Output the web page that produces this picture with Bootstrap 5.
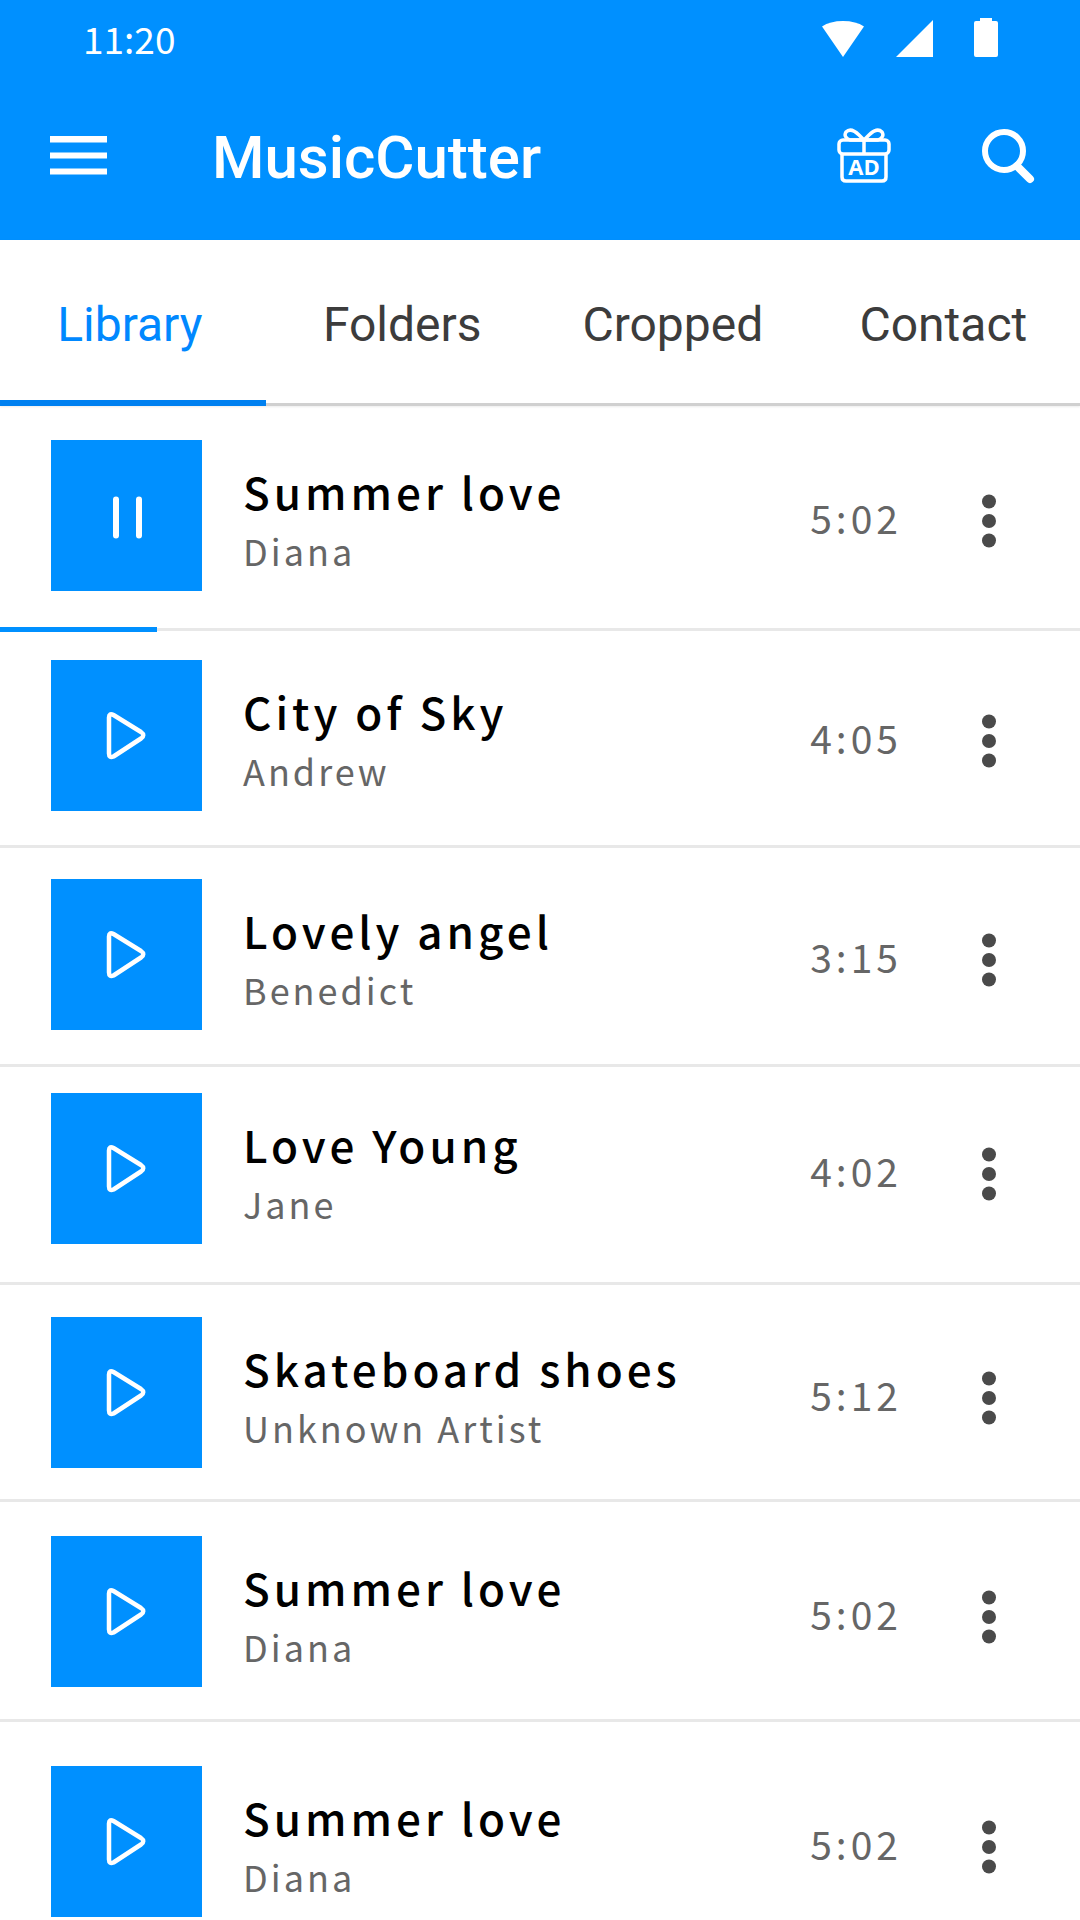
<!DOCTYPE html>
<html lang="en">
<head>
<meta charset="utf-8">
<meta name="viewport" content="width=device-width, initial-scale=1">
<title>MusicCutter</title>
<link href="https://cdn.jsdelivr.net/npm/bootstrap@5.3.0/dist/css/bootstrap.min.css" rel="stylesheet">
<style>
:root { --brand: #0090ff; --ink: #3c3c3c; --soft: #666; --rule: #e8e8e8; }
body { font-family: "Noto Sans CJK SC", "Noto Sans", sans-serif; background: #fff; color: #000; overflow-x: hidden; }
svg { display: block; }
.app-head { background: var(--brand); color: #fff; height: 240px; }
.status { height: 76px; padding: 0 81px 0 83px; }
.clock { font-size: 37px; line-height: 40px; }
.status-icons { gap: 32px; }
.toolbar { padding: 38px 45px 0 50px; }
.toolbar .plain-btn { margin-bottom: 5px; }
.brand-name { font: 500 60px/88px Roboto, sans-serif; margin-left: 105px; }
.plain-btn { background: none; border: 0; padding: 0; color: inherit; }
.gift { margin-right: 91px; }
.tabs { height: 166px; border-bottom: 3px solid #d0d0d0; box-shadow: 0 1px 2px rgba(0,0,0,.08); }
.tab { font: 400 48px/56px Roboto, sans-serif; color: var(--ink); text-decoration: none; height: 166px; padding-top: 57px; text-align: center; }
.tab.active { color: #0088ff; border-bottom: 6px solid #0080f0; padding-right: 6px; }
.track { padding: 31px 0 34px 51px; border-bottom: 3px solid var(--rule); position: relative; }
.track:nth-child(1) { padding-top: 34px; padding-bottom: 37px; }
.track:nth-child(2) { padding-top: 29px; }
.track:nth-child(4) { padding-top: 26px; padding-bottom: 38px; }
.track:nth-child(5) { padding-top: 32px; padding-bottom: 31px; }
.track:nth-child(6) { padding-top: 34px; padding-bottom: 32px; }
.track:nth-child(7) { padding-top: 44px; padding-bottom: 0; border-bottom: 0; }
.tile { width: 151px; height: 151px; background: var(--brand); border: 0; padding: 0; flex: none; }
.names { margin-left: 41px; padding-top: 21px; }
.song { font-size: 44px; line-height: 60px; letter-spacing: 4px; margin: 0; font-weight: 500; }
.artist { font-size: 36px; line-height: 58px; letter-spacing: 3px; color: var(--soft); margin: 0; }
.length { font-size: 39px; line-height: 52px; letter-spacing: 4px; color: var(--soft); padding-top: 51px; }
.more { margin: 51px 81px 0 77px; color: #4a4a4a; }
.played { position: absolute; left: 0; bottom: -4px; height: 5px; background: var(--brand); border-radius: 0; }
</style>
<script src="https://cdn.jsdelivr.net/npm/bootstrap@5.3.0/dist/js/bootstrap.bundle.min.js"></script>
</head>
<body>
<svg class="d-none" aria-hidden="true">
  <symbol id="play" viewBox="0 0 151 151"><path d="M58 57.500Q58 52.500 62.500 55L90 72Q94.500 75 90 78.500L62.500 96.500Q58 98.500 58 93.500Z" fill="none" stroke="#fff" stroke-width="4.500" stroke-linejoin="round"/></symbol>
  <symbol id="pause" viewBox="0 0 151 151"><path d="M65 59.500V95.500M88 59.500V95.500" stroke="#fff" stroke-width="6" stroke-linecap="round"/></symbol>
  <symbol id="dots" viewBox="0 0 20 60"><circle cx="10" cy="10.500" r="7"/><circle cx="10" cy="30" r="7"/><circle cx="10" cy="49.500" r="7"/></symbol>
</svg>

<header class="app-head">
  <div class="status d-flex justify-content-between align-items-center">
    <time class="clock">11:20</time>
    <div class="status-icons d-flex align-items-center" aria-hidden="true">
      <svg width="42" height="40" viewBox="0 0 42 40" fill="#fff"><path d="M0 8.500Q8 3 21 3T42 8.500L21 39Z"/></svg>
      <svg width="37" height="40" viewBox="0 0 37 40" fill="#fff"><path d="M37 2V39H0Z"/></svg>
      <svg class="ms-2" width="26" height="40" viewBox="0 0 26 40" fill="#fff"><path d="M7 0H19V3H23Q25 3 25 5V37Q25 39 23 39H3Q1 39 1 37V5Q1 3 3 3H7Z"/></svg>
    </div>
  </div>
  <div class="toolbar d-flex align-items-center">
    <button class="plain-btn" type="button" aria-label="Menu"><svg width="57" height="40" viewBox="0 0 57 40" fill="#fff"><path d="M0 0H57V6.500H0ZM0 16.500H57V22.500H0ZM0 32.500H57V38.500H0Z"/></svg></button>
    <h1 class="brand-name mb-0 me-auto">MusicCutter</h1>
    <button class="plain-btn gift" type="button" aria-label="Gift ads">
      <svg width="54" height="56" viewBox="0 0 54 56" fill="none" stroke="#fff" stroke-width="3.500" stroke-linejoin="round">
        <rect x="2" y="12" width="50" height="14" rx="4"/>
        <path d="M27 12V26M5 26V49Q5 53 9 53H45Q49 53 49 49V26M27 12H13Q6 9 9 4Q14-1 22 7L27 12ZM27 12H41Q48 9 45 4Q40-1 32 7Z"/>
        <text x="27" y="47" text-anchor="middle" font-family="Open Sans, sans-serif" font-weight="700" font-size="22" fill="#fff" stroke="none">AD</text>
      </svg>
    </button>
    <button class="plain-btn" type="button" aria-label="Search"><svg width="53" height="56" viewBox="0 0 53 56" fill="none" stroke="#fff"><circle cx="22" cy="23" r="19" stroke-width="6"/><path d="M35 38L48 51" stroke-width="8" stroke-linecap="round"/></svg></button>
  </div>
</header>

<nav class="tabs d-flex">
  <a class="tab active" href="#library" style="width:24.600%">Library</a>
  <a class="tab" href="#folders" style="width:25.300%">Folders</a>
  <a class="tab" href="#cropped" style="width:24.800%">Cropped</a>
  <a class="tab" href="#contact" style="width:25.300%">Contact</a>
</nav>

<main>
  <ul class="list-unstyled mb-0">
    <li class="track d-flex align-items-start">
      <button class="tile" type="button" aria-label="Pause"><svg width="151" height="151"><use href="#pause"/></svg></button>
      <div class="names me-auto"><h2 class="song">Summer love</h2><p class="artist">Diana</p></div>
      <span class="length">5:02</span>
      <button class="plain-btn more" type="button" aria-label="More"><svg width="20" height="60" fill="currentColor"><use href="#dots"/></svg></button>
      <div class="played" role="progressbar" aria-label="Played" aria-valuenow="14.500" aria-valuemin="0" aria-valuemax="100" style="width:14.500%"></div>
    </li>
    <li class="track d-flex align-items-start">
      <button class="tile" type="button" aria-label="Play"><svg width="151" height="151"><use href="#play"/></svg></button>
      <div class="names me-auto"><h2 class="song">City of Sky</h2><p class="artist">Andrew</p></div>
      <span class="length">4:05</span>
      <button class="plain-btn more" type="button" aria-label="More"><svg width="20" height="60" fill="currentColor"><use href="#dots"/></svg></button>
    </li>
    <li class="track d-flex align-items-start">
      <button class="tile" type="button" aria-label="Play"><svg width="151" height="151"><use href="#play"/></svg></button>
      <div class="names me-auto"><h2 class="song">Lovely angel</h2><p class="artist">Benedict</p></div>
      <span class="length">3:15</span>
      <button class="plain-btn more" type="button" aria-label="More"><svg width="20" height="60" fill="currentColor"><use href="#dots"/></svg></button>
    </li>
    <li class="track d-flex align-items-start">
      <button class="tile" type="button" aria-label="Play"><svg width="151" height="151"><use href="#play"/></svg></button>
      <div class="names me-auto"><h2 class="song">Love Young</h2><p class="artist">Jane</p></div>
      <span class="length">4:02</span>
      <button class="plain-btn more" type="button" aria-label="More"><svg width="20" height="60" fill="currentColor"><use href="#dots"/></svg></button>
    </li>
    <li class="track d-flex align-items-start">
      <button class="tile" type="button" aria-label="Play"><svg width="151" height="151"><use href="#play"/></svg></button>
      <div class="names me-auto"><h2 class="song">Skateboard shoes</h2><p class="artist">Unknown Artist</p></div>
      <span class="length">5:12</span>
      <button class="plain-btn more" type="button" aria-label="More"><svg width="20" height="60" fill="currentColor"><use href="#dots"/></svg></button>
    </li>
    <li class="track d-flex align-items-start">
      <button class="tile" type="button" aria-label="Play"><svg width="151" height="151"><use href="#play"/></svg></button>
      <div class="names me-auto"><h2 class="song">Summer love</h2><p class="artist">Diana</p></div>
      <span class="length">5:02</span>
      <button class="plain-btn more" type="button" aria-label="More"><svg width="20" height="60" fill="currentColor"><use href="#dots"/></svg></button>
    </li>
    <li class="track d-flex align-items-start">
      <button class="tile" type="button" aria-label="Play"><svg width="151" height="151"><use href="#play"/></svg></button>
      <div class="names me-auto"><h2 class="song">Summer love</h2><p class="artist">Diana</p></div>
      <span class="length">5:02</span>
      <button class="plain-btn more" type="button" aria-label="More"><svg width="20" height="60" fill="currentColor"><use href="#dots"/></svg></button>
    </li>
  </ul>
</main>
</body>
</html>
